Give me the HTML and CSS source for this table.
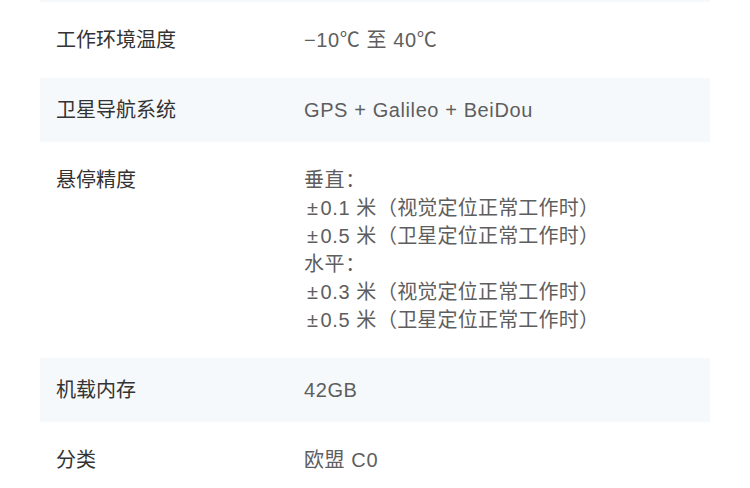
FILE: index.html
```html
<!DOCTYPE html>
<html lang="zh-CN">
<head>
<meta charset="utf-8">
<link rel="stylesheet" href="styles.css">
</head>
<body>
<div class="spec">
  <div class="row shaded top"></div>
  <div class="row">
    <div class="label">工作环境温度</div>
    <div class="value">−10℃ 至 40℃</div>
  </div>
  <div class="row shaded">
    <div class="label">卫星导航系统</div>
    <div class="value">GPS + Galileo + BeiDou</div>
  </div>
  <div class="row">
    <div class="label">悬停精度</div>
    <div class="value">垂直：<br><span class="pm">±</span>0.1 米<span class="paren">（视觉定位正常工作时）</span><br><span class="pm">±</span>0.5 米<span class="paren">（卫星定位正常工作时）</span><br>水平：<br><span class="pm">±</span>0.3 米<span class="paren">（视觉定位正常工作时）</span><br><span class="pm">±</span>0.5 米<span class="paren">（卫星定位正常工作时）</span></div>
  </div>
  <div class="row shaded">
    <div class="label">机载内存</div>
    <div class="value">42GB</div>
  </div>
  <div class="row">
    <div class="label">分类</div>
    <div class="value">欧盟 C0</div>
  </div>
</div>
</body>
</html>
```
FILE: styles.css
```css
html, body {
  margin: 0;
  padding: 0;
  background: #fff;
}
.spec {
  padding: 0 40px;
  font-family: "Liberation Sans", "Noto Sans CJK SC", sans-serif;
  font-size: 20px;
  line-height: 28px;
}
.row {
  display: flex;
  padding: 24px 16px;
}
.row.shaded {
  background: #f6f9fb;
  padding: 18px 16px;
}
.row.top {
  height: 2px;
  padding: 0;
}
.label {
  width: 248px;
  flex: none;
  color: #333;
}
.value {
  color: #5e5e5e;
  letter-spacing: 0.6px;
}
.pm {
  margin-left: 3px;
  margin-right: 2px;
}
.paren {
  letter-spacing: 0.2px;
}
```
